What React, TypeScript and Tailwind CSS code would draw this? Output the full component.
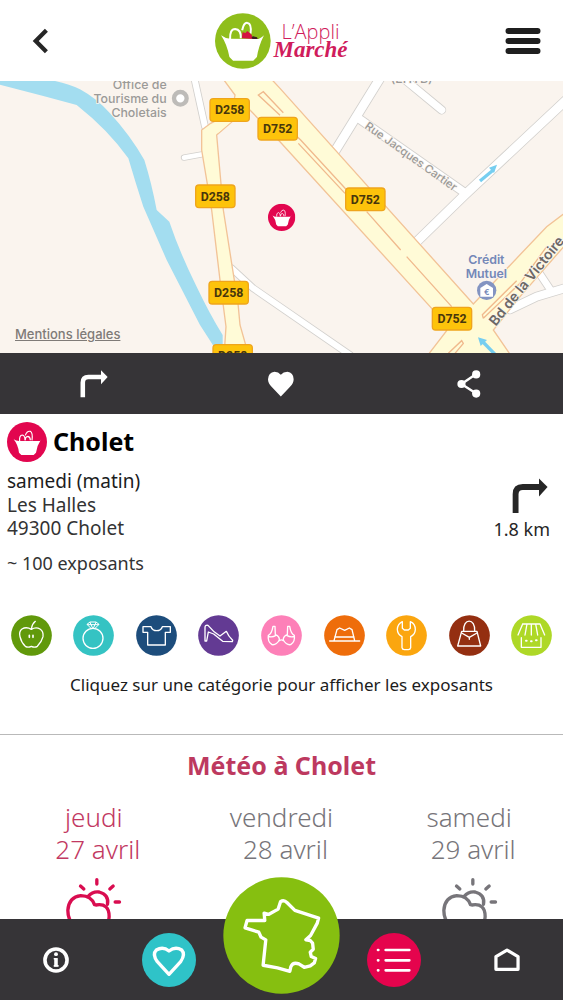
import type { ReactNode } from "react";

function BasketArt() {
  return (
    <>
      <circle cx="60" cy="60" r="60" fill="#e2064f" />
      <path d="M20 52Q28 58 39 57L100 57L103 50Q90 70 87 92L80 99H43L36 92Q33 68 20 52Z" fill="#fff" />
      <path d="M38 57Q36 40 46 39Q54 40 54 55M55 40Q60 26 70 28Q78 32 75 55M55 55Q54 44 63 43Q70 45 70 55" fill="none" stroke="#fff" strokeWidth="3.5" />
    </>
  );
}

function Logo() {
  return (
    <a href="#accueil" aria-label="L'Appli Marché" className="flex items-center gap-0.5">
      <svg viewBox="46 39 167 166" className="size-14" aria-hidden="true">
        <circle cx="129" cy="122" r="83" fill="#8fbe1b" />
        <path d="M91 116Q90 86 106 86Q124 87 123 114M127 90Q132 66 143 68Q156 70 152 100" fill="none" stroke="#fff" strokeWidth="6" />
        <path d="M126 114L128 96L137 98L142 92L150 98L156 105L158 116Z" fill="#d5123f" />
        <path d="M155 112Q158 105 165 109Q173 109 173 116L158 117Z" fill="#3a1c20" />
        <path d="M64 105Q75 114 92 115L176 116Q186 112 192 105Q176 137 171 170L160 181H100L89 170Q82 132 64 105Z" fill="#fff" />
      </svg>
      <span className="flex flex-col text-[#d01c5c]">
        <span className="pl-2 font-['Open_Sans',sans-serif] text-[20px] leading-[18px] font-light">L’Appli</span>
        <span className="font-['Liberation_Serif',serif] text-[23px] leading-[18px] font-bold italic">Marché</span>
      </span>
    </a>
  );
}

const whiteRoads: [string, number][] = [
  ["M582 -10L615 140", 18],
  ["M552 233L612 222", 14],
  ["M695 565L760 625L1050 825", 18],
  ["M1140 -5L1002 218", 26],
  ["M1075 115L1390 335", 24],
  ["M1210 -5L1325 90", 22],
  ["M1720 40L1394 345L1245 490", 26],
  ["M1720 617L1610 650L1530 688", 24],
  ["M1615 575L1655 635", 20],
];

const shields: [string, number, number][] = [
  ["D258", 689, 90],
  ["D752", 833, 146],
  ["D258", 646, 349],
  ["D752", 1096, 358],
  ["D258", 686, 638],
  ["D752", 1356, 716],
  ["D258", 698, 828],
];

function MarketMap() {
  return (
    <svg viewBox="0 3 1689 816" preserveAspectRatio="xMidYMid slice" className="h-[272px] w-full" role="img" aria-label="Carte de Cholet">
      <rect width="1689" height="830" fill="#faf4ee" />
      <path d="M0 0H150Q205 10 240 28Q290 55 330 100Q390 165 433 240Q455 310 470 390L508 425Q540 520 590 620Q628 700 668 765V800H642L600 735L500 540L430 380Q407 310 385 235Q325 150 230 75L130 48L0 14Z" fill="#a3ddf0" />
      <g fill="none" strokeLinecap="round" strokeLinejoin="round">
        {whiteRoads.map(([d, w]) => <path key={d} d={d} stroke="#d2d0cd" strokeWidth={w + 5} />)}
        {whiteRoads.map(([d, w]) => <path key={d} d={d} stroke="#fff" strokeWidth={w} />)}
      </g>
      <g fill="#fffbd7" stroke="#f2c397" strokeWidth="4">
        <path d="M690 100L632 130L605 150V210L635 390L660 600L678 740L672 830H747L720 735L714 670L695 550L670 390L650 165L765 65Z" />
        <path d="M668 -5L705 45L700 75L750 90L840 185L1295 685L1340 752L1280 830H1535L1480 750L1560 650L1700 490V395L1640 440L1420 672L840 25L812 -5Z" />
      </g>
      <path d="M653 160L690 95L752 92L700 120Z" fill="#fffbd7" />
      <path d="M840 106L775 45L790 35L850 98M870 150L902 180L1040 330M895 190L1035 340M1100 395L1202 510M1220 530L1355 680M1450 715L1560 610L1640 500M1450 715L1447 704L1550 602M1345 820L1385 782L1390 790L1365 820" fill="none" stroke="#f0b98d" strokeWidth="4" />
      <g stroke="#76cef0" strokeWidth="10" fill="#76cef0">
        <path d="M1440 303L1480 270" />
        <path d="M1467 263L1491 254L1482 279Z" stroke="none" />
        <path d="M1492 830L1446 783" />
        <path d="M1434 772L1442 798L1461 780Z" stroke="none" />
      </g>
      <g fontFamily="Inter, sans-serif" fill="#9b9a98" fontSize="37" fontWeight="500" stroke="#faf4ee" strokeWidth="5" paintOrder="stroke">
        <text x="500" y="28" textAnchor="end">Office de</text>
        <text x="500" y="69" textAnchor="end">Tourisme du</text>
        <text x="500" y="110" textAnchor="end">Choletais</text>
        <text x="1235" y="8" textAnchor="middle">(EHTB)</text>
        <text transform="translate(1092 143) rotate(35.5)" fontSize="34">Rue Jacques Cartier</text>
        <text transform="translate(1487 740) rotate(-51)" fontSize="42" fontWeight="600" fill="#6c6865">Bd de la Victoire</text>
        <g fill="#7488b8" fontWeight="600" textAnchor="middle">
          <text x="1459" y="552">Crédit</text>
          <text x="1459" y="593">Mutuel</text>
        </g>
      </g>
      <circle cx="541" cy="55" r="19" fill="#fff" stroke="#bdbbb8" strokeWidth="13" />
      <circle cx="1460" cy="631" r="29" fill="#8394c2" />
      <path d="M1441 624L1460 612L1479 624V650H1441Z" fill="#fff" />
      <text x="1460" y="644" textAnchor="middle" fontFamily="Inter, sans-serif" fontSize="24" fontWeight="700" fill="#7488b8">€</text>
      {shields.map(([name, x, y]) => (
        <g key={`${x}-${y}`}>
          <rect x={x - 59} y={y - 34} width="118" height="68" rx="10" fill="#fdc30b" stroke="#efa51c" strokeWidth="4" />
          <text x={x} y={y + 13} textAnchor="middle" fontFamily="Roboto, sans-serif" fontSize="37" fontWeight="700" fill="#47360c">{name}</text>
        </g>
      ))}
      <svg x="804" y="371" width="82" height="82" viewBox="0 0 120 120">
        <BasketArt />
      </svg>
    </svg>
  );
}

function TurnRight({ className }: { className: string }) {
  return (
    <svg viewBox="0 0 80 80" className={className} aria-hidden="true">
      <path d="M8 78V36Q8 20 24 20H62" fill="none" stroke="currentColor" strokeWidth="13" />
      <path d="M60 1L79 20L60 41Z" fill="currentColor" />
    </svg>
  );
}

const categories: { name: string; color: string; x: number; art: ReactNode }[] = [
  {
    name: "Alimentation", color: "#61990b", x: 33,
    art: <><path d="M94 73Q79 64 66 72Q56 80 60 95Q64 113 76 124Q84 129 94 124Q104 129 112 124Q125 111 129 95Q131 79 120 72Q108 65 94 73ZM94 72Q96 57 106 49" /><path d="M88 91V97M99 91V97" strokeWidth="5" /></>,
  },
  {
    name: "Bijoux", color: "#35c3c3", x: 221,
    art: <><circle cx="281" cy="100" r="30" /><path d="M275 70L263 58L272 51H290L299 58L287 70M264 59H298M272 52L281 72L290 52" strokeWidth="3" /></>,
  },
  {
    name: "Vêtements", color: "#1d4d7c", x: 408,
    art: <path d="M429 65H453Q457 77 470 77Q483 77 487 65H511V82H496V120H443V82H429Z" />,
  },
  {
    name: "Chaussures", color: "#633a93", x: 596,
    art: <path d="M617 108V68Q617 59 626 61Q643 82 662 93L681 79Q687 94 700 106L699 110L670 109L643 87L627 81L622 108Z" />,
  },
  {
    name: "Lingerie", color: "#fd80b8", x: 784,
    art: <><path d="M806 91Q816 87 820 64H826L827 89Q840 94 839 105Q830 121 817 119Q803 110 806 91ZM806 94Q817 98 829 91" /><path d="M884 91Q874 87 870 64H864L863 89Q850 94 851 105Q860 121 873 119Q887 110 884 91ZM884 94Q873 98 861 91M839 107Q845 102 851 107" /></>,
  },
  {
    name: "Chapeaux", color: "#ee6d0b", x: 971,
    art: <path d="M988 108H1078M1001 107L1010 74L1018 69L1033 76L1047 69L1055 74L1063 107M1003 96H1061" />,
  },
  {
    name: "Outillage", color: "#fba60f", x: 1159,
    art: <path d="M1208 50V70L1214 75H1226L1232 70V50Q1247 56 1247 74Q1246 89 1233 95V128Q1232 134 1226 134H1214Q1208 134 1207 128V95Q1193 88 1193 73Q1194 57 1208 50Z" />,
  },
  {
    name: "Maroquinerie", color: "#942f11", x: 1347,
    art: <><path d="M1391 79C1388 38 1427 38 1424 79" /><path d="M1385 79H1431L1442 123H1373Z" /><path d="M1385 84L1408 97L1431 84M1408 97V103" /></>,
  },
  {
    name: "Autres étals", color: "#aed827", x: 1535,
    art: <><path d="M1570 57H1622L1636 90M1570 57L1556 90M1583 57L1577 90M1596 57V90M1609 57L1615 90M1566 98V127H1625V98" /><path d="M1580 107H1582M1595 109H1597M1610 106H1612" strokeWidth="6" /></>,
  },
];

const forecast = [
  { day: "jeudi", date: "27 avril", tone: "text-[#c23862]", icon: "text-[#d90d50]" },
  { day: "vendredi", date: "28 avril", tone: "text-[#77757a]", icon: "text-[#77757a]" },
  { day: "samedi", date: "29 avril", tone: "text-[#77757a]", icon: "text-[#77757a]" },
];

function CloudSun({ className }: { className: string }) {
  return (
    <svg viewBox="196 26 170 162" className={className} fill="none" stroke="currentColor" strokeWidth="10" strokeLinecap="round" strokeLinejoin="round" aria-hidden="true">
      <path d="M291 34V47M242 53L252 62M340 53L330 62M346 101H359" />
      <path d="M265 84Q279 68 298 71Q328 79 323 108" />
      <path d="M288 110Q328 103 328 145Q325 180 296 180H238Q204 165 204 126Q207 86 243 82Q275 83 284 109Z" />
    </svg>
  );
}

export default function App() {
  return (
    <div className="flex h-screen flex-col bg-white font-['Noto_Sans',sans-serif] text-[#333]">
      <header className="flex h-[81px] shrink-0 items-center justify-between">
        <button type="button" aria-label="Retour" className="flex w-20 justify-center">
          <svg viewBox="0 0 30 30" className="size-8" fill="none" stroke="#262626" strokeWidth="4" aria-hidden="true">
            <path d="M21 5L11 15L21 25" />
          </svg>
        </button>
        <Logo />
        <button type="button" aria-label="Menu" className="flex w-20 justify-center">
          <svg viewBox="0 0 35 28" className="h-7 w-9" stroke="#1f1f1f" strokeWidth="6" strokeLinecap="round" aria-hidden="true">
            <path d="M3 4H32M3 14H32M3 24H32" />
          </svg>
        </button>
      </header>

      <main className="min-h-0 flex-1 overflow-hidden">
        <div className="relative">
          <MarketMap />
          <a href="#mentions" className="absolute bottom-[11px] left-[15px] font-['Inter',sans-serif] text-[13px] leading-4 font-medium text-[#7f7b78] underline">
            Mentions légales
          </a>
        </div>

        <div className="grid h-[61px] grid-cols-3 bg-[#363437] text-white">
          <button type="button" aria-label="Itinéraire" className="flex items-center justify-center">
            <TurnRight className="size-7" />
          </button>
          <button type="button" aria-label="Ajouter aux favoris" className="flex items-center justify-center">
            <svg viewBox="746 64 75 72" className="size-[26px]" fill="currentColor" aria-hidden="true">
              <path d="M783 136L757 109Q746 97 746 86Q747 68 765 65Q776 65 783 73Q790 65 802 65Q819 67 820 86Q820 97 809 109Z" />
            </svg>
          </button>
          <button type="button" aria-label="Partager" className="flex items-center justify-center">
            <svg viewBox="1271 60 70 82" className="h-7 w-6" fill="currentColor" aria-hidden="true">
              <path d="M1327 72L1284 101L1327 129" fill="none" stroke="currentColor" strokeWidth="7" />
              <circle cx="1327" cy="73" r="12" />
              <circle cx="1284" cy="101" r="12" />
              <circle cx="1327" cy="129" r="12" />
            </svg>
          </button>
        </div>

        <section className="px-[7px] pt-[7px]">
          <h1 className="flex items-center gap-1.5 text-[25px] leading-[41px] font-bold text-black">
            <svg viewBox="0 0 120 120" className="size-10" aria-hidden="true">
              <BasketArt />
            </svg>
            Cholet
          </h1>
          <div className="flex items-start justify-between pt-2">
            <div className="text-[19px] leading-[23px]">
              <p className="pb-px text-[#1c1c1c]">samedi (matin)</p>
              <p>Les Halles</p>
              <p>49300 Cholet</p>
              <p className="pt-3 text-[18px]">~ 100 exposants</p>
            </div>
            <a href="#itineraire" className="flex flex-col items-center px-1.5 pt-2 text-[18px] leading-[26px] text-[#262626]">
              <TurnRight className="ml-4 size-9" />
              <span className="pt-0.5">1.8 km</span>
            </a>
          </div>
        </section>

        <section className="pt-10">
          <div className="grid grid-cols-9 justify-items-center">
            {categories.map((c) => (
              <button key={c.name} type="button" aria-label={c.name}>
                <svg viewBox={`${c.x} 30 123 123`} className="size-[41px]" fill="none" stroke="#fff" strokeWidth="4" strokeLinecap="round" strokeLinejoin="round" aria-hidden="true">
                  <circle cx={c.x + 61.5} cy="91.5" r="61" fill={c.color} stroke="none" />
                  {c.art}
                </svg>
              </button>
            ))}
          </div>
          <p className="pt-[17px] text-center text-[17px] leading-6 text-[#1c1c1c]">Cliquez sur une catégorie pour afficher les exposants</p>
        </section>

        <section className="mt-[37px] border-t border-[#b9b9b9] pt-3">
          <h2 className="text-center text-[25px] leading-9 font-bold text-[#bd395f]">Météo à Cholet</h2>
          <div className="grid grid-cols-3 pt-[18px]">
            {forecast.map((f) => (
              <div key={f.day} className={`flex flex-col items-center text-[26px] leading-8 font-light ${f.tone}`}>
                <span>{f.day}</span>
                <span className="pl-2">{f.date}</span>
                <CloudSun className={`mt-3 h-[54px] w-[57px] ${f.icon}`} />
              </div>
            ))}
          </div>
        </section>
      </main>

      <nav aria-label="Navigation principale" className="z-10 grid h-[81px] shrink-0 grid-cols-5 items-center justify-items-center bg-[#363437]">
        <button type="button" aria-label="Informations">
          <svg viewBox="0 0 80 80" className="size-[26px]" fill="none" stroke="#fff" aria-hidden="true">
            <circle cx="40" cy="40" r="34" strokeWidth="11" />
            <circle cx="40" cy="22" r="6" fill="#fff" stroke="none" />
            <path d="M33 36H41M33 58H48" strokeWidth="5" />
            <path d="M40 34V60" strokeWidth="11" />
          </svg>
        </button>
        <button type="button" aria-label="Favoris">
          <svg viewBox="421 185 162 162" className="size-[54px]" aria-hidden="true">
            <circle cx="502" cy="266" r="81" fill="#2fc3c8" />
            <path d="M502 309L467 271Q451 249 464 236Q484 224 502 239Q521 224 540 236Q552 249 537 271Z" fill="none" stroke="#fff" strokeWidth="10" strokeLinejoin="round" />
          </svg>
        </button>
        <button type="button" aria-label="Carte de France" className="-mt-12">
          <svg viewBox="670 20 350 350" className="size-[117px]" aria-hidden="true">
            <circle cx="845" cy="195" r="174" fill="#86bf10" />
            <path d="M842 94Q852 87 862 97L885 120L956 143L952 158L932 195L918 208L931 210L938 218L940 236L931 245L934 258L947 264L943 277L931 286L913 290L897 280Q880 273 873 288L870 302L833 292L790 284L798 208L784 200L777 185L736 172L742 150L795 150L793 128L806 132L835 116Z" fill="none" stroke="#fff" strokeWidth="10" strokeLinejoin="round" />
          </svg>
        </button>
        <button type="button" aria-label="Liste des marchés">
          <svg viewBox="86 186 162 162" className="size-[54px]" stroke="#fff" strokeLinecap="round" aria-hidden="true">
            <circle cx="167" cy="267" r="81" fill="#e5044d" stroke="none" />
            <path d="M119 237H120M142 237H213M119 268H120M142 268H213M119 298H120M142 298H213" strokeWidth="8" />
          </svg>
        </button>
        <button type="button" aria-label="Accueil">
          <svg viewBox="461 229 80 76" className="h-[25px] w-[26px]" fill="none" stroke="#fff" strokeWidth="10" strokeLinejoin="round" aria-hidden="true">
            <path d="M467 297V258L501 238L535 258V297Z" />
          </svg>
        </button>
      </nav>
    </div>
  );
}
